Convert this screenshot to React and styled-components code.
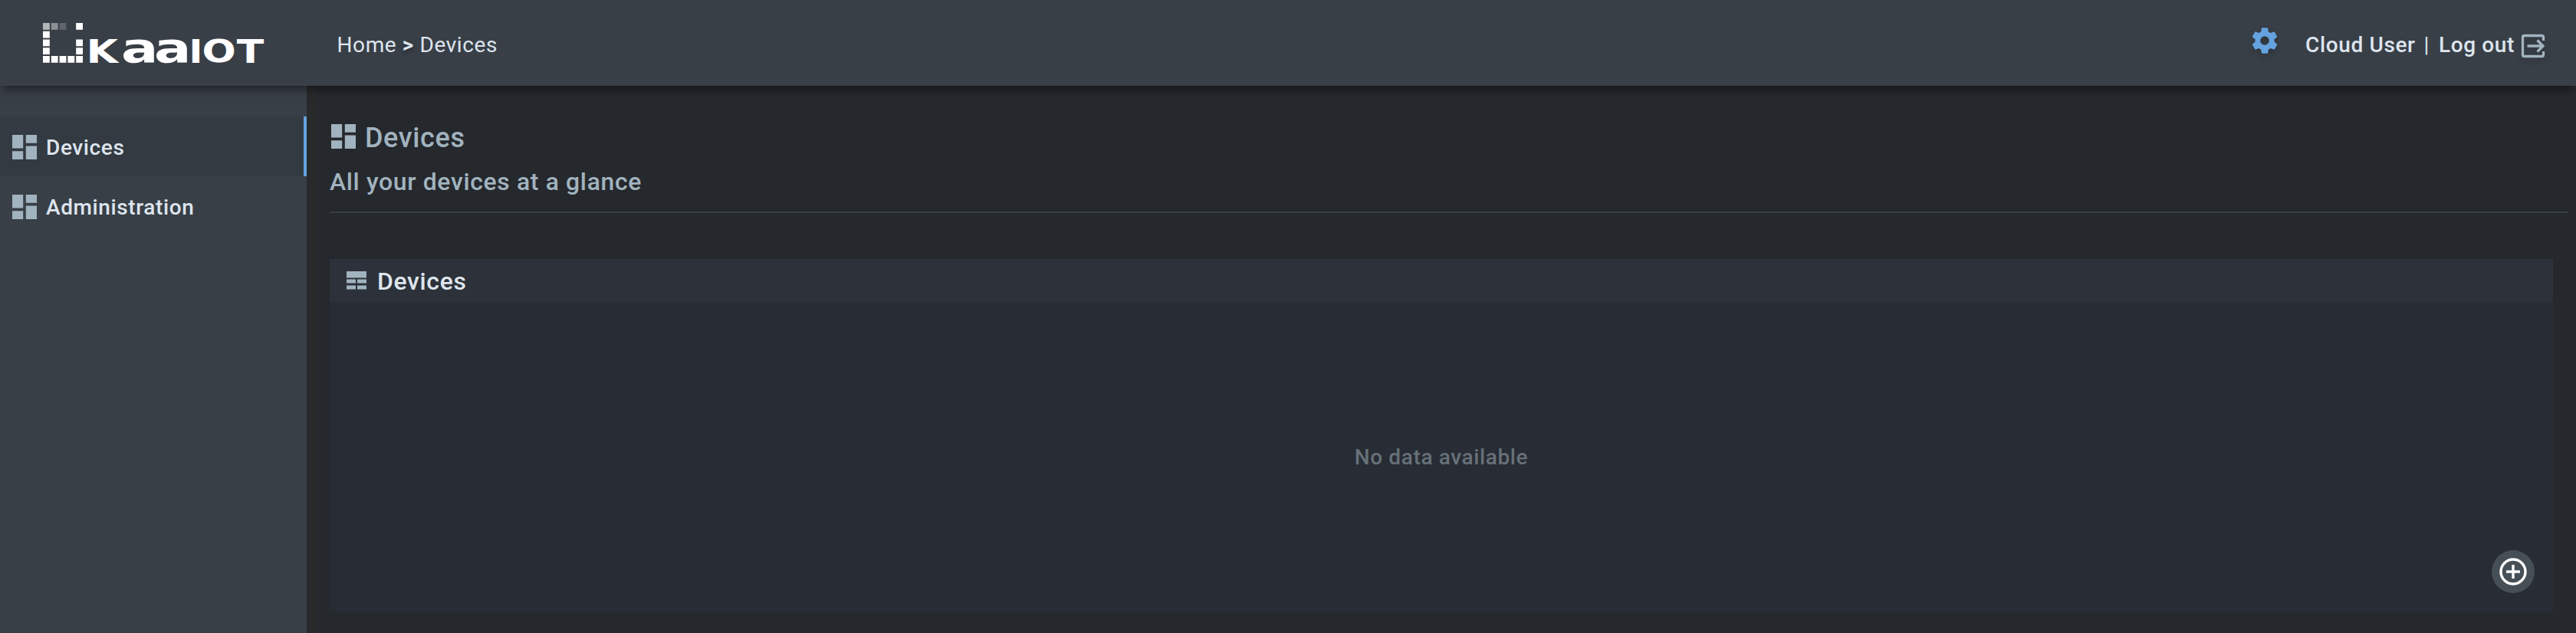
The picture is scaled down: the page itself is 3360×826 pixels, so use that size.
import React from "react";
import styled, { createGlobalStyle } from "styled-components";

const Global = createGlobalStyle`
  *, *::before, *::after { box-sizing: border-box; }
  body { margin: 0; background: #25282c; font-family: Roboto, "Liberation Sans", sans-serif; }
`;

const Page = styled.div`
  display: grid;
  grid-template-columns: 400px 1fr;
  grid-template-rows: 112px 1fr;
  height: 826px;
  overflow: hidden;
  letter-spacing: 0.62px;
  color: #dee5ee;
`;

const Header = styled.header`
  grid-column: 1 / -1;
  position: relative;
  z-index: 2;
  display: flex;
  align-items: center;
  background: #393f47;
  box-shadow: 0 8px 12px -4px rgba(0, 0, 0, 0.5);
`;

const Logo = styled.svg`
  display: block;
  width: 400px;
  height: 112px;
  fill: #fff;
  font-family: "DejaVu Sans", sans-serif;
  font-weight: 700;
  letter-spacing: 0;
`;

const Breadcrumbs = styled.nav`
  flex: 1;
  display: flex;
  gap: 7.5px;
  padding: 6px 0 0 39.5px;
  font-size: 28px;
  line-height: 36px;
`;

const Separator = styled.span`
  font-weight: 700;
  text-shadow: 0 4px 6px rgba(0, 0, 0, 0.35);
`;

const UserArea = styled.div`
  display: flex;
  align-items: center;
  padding: 6px 38px 0 0;
  font-size: 28px;
  font-weight: 500;
  line-height: 36px;
  white-space: pre;
`;

const Icon = styled.svg`
  display: block;
  flex: none;
  width: ${(p) => p.$w}px;
  height: ${(p) => p.$h ?? p.$w}px;
  fill: ${(p) => p.$color ?? "#a1b3bf"};
`;

const SettingsIcon = styled(Icon)`
  margin: 0 33px 12px 0;
  filter: drop-shadow(0 4px 4px rgba(0, 0, 0, 0.2));
`;

const LogoutIcon = styled(Icon)`
  margin: 2px 0 0 6px;
  filter: drop-shadow(0 4px 4px rgba(0, 0, 0, 0.2));
`;

const Bar = styled.span`
  margin: 0 12px 0 11px;
  font-weight: 400;
`;

const Sidebar = styled.aside`
  padding-top: 40px;
  background: #393f47;
`;

const NavItem = styled.a`
  display: flex;
  align-items: center;
  gap: 12px;
  height: 78px;
  padding: 2px 0 0 16px;
  border-right: 4px solid ${(p) => (p.$active ? "#64a3e0" : "transparent")};
  background: ${(p) => (p.$active ? "#343a42" : "transparent")};
  font-size: 28px;
  font-weight: 500;
`;

const NavLabel = styled.span`
  padding-top: 1px;
`;

const Main = styled.main`
  padding: 44px 10px 0 18px;
  border-left: 12px solid #28292b;
`;

const PageHeading = styled.div`
  height: 122px;
  border-bottom: 2px solid #393f47;
  color: #a1b3bf;
`;

const Title = styled.h1`
  display: flex;
  align-items: center;
  gap: 12px;
  margin: 0;
  padding-left: 2px;
  height: 44px;
  font-size: 36px;
  font-weight: 500;
`;

const TitleText = styled.span`
  padding-top: 4px;
`;

const Subtitle = styled.p`
  margin: 18px 0 0;
  font-size: 32px;
  font-weight: 500;
  line-height: 38px;
`;

const Panel = styled.section`
  display: flex;
  flex-direction: column;
  height: 460px;
  margin: 60px 20px 0 0;
  background: #282c34;
`;

const PanelHeader = styled.h2`
  display: flex;
  align-items: center;
  gap: 14px;
  height: 56px;
  margin: 0;
  padding: 2px 0 0 22px;
  background: #2d3139;
  font-size: 32px;
  font-weight: 500;
`;

const PanelIcon = styled(Icon)`
  margin-top: -2px;
`;

const PanelBody = styled.div`
  position: relative;
  flex: 1;
  display: flex;
  align-items: center;
  justify-content: center;
  color: #667179;
  font-size: 28px;
  font-weight: 500;
`;

const AddButton = styled.button`
  position: absolute;
  right: 24px;
  bottom: 24px;
  display: grid;
  place-items: center;
  width: 56px;
  height: 56px;
  padding: 0;
  border: 0;
  border-radius: 50%;
  background: #464f56;
`;

const BLOCKS = [
  [0, 0, 0.62], [1, 0, 0.42], [2, 0, 0.2], [4, 0, 1], [0, 1, 1], [0, 2, 1], [4, 2, 1],
  [0, 3, 1], [4, 3, 1], [0, 4, 1], [1, 4, 1], [2, 4, 1], [3, 4, 1], [4, 4, 1],
];

const WORDMARK = [
  { ch: "K", x: 112.6, y: 82, size: 42.5, stretch: 1.26 },
  { ch: "a", x: 157.9, y: 81.3, size: 54, stretch: 1.33 },
  { ch: "a", x: 200.9, y: 81.3, size: 54, stretch: 1.33 },
  { ch: "I", x: 246.6, y: 82, size: 42.5, stretch: 1.13 },
  { ch: "O", x: 263.4, y: 81.4, size: 41, stretch: 1.27 },
  { ch: "T", x: 308.8, y: 82, size: 42.5, stretch: 1.226 },
];

const DashboardIcon = () => (
  <Icon $w={32} viewBox="0 0 32 32">
    <path d="M0 0h14.2v17.6H0zM17.8 0H32v10.8H17.8zM0 21.2h14.2V32H0zM17.8 14.4H32V32H17.8z" />
  </Icon>
);

const TableIcon = () => (
  <PanelIcon $w={26} $h={24} viewBox="0 0 26 24">
    <path d="M0 0h26v8.400H0zM0 10.400h12v5.200H0zM14 10.400h12v5.200H14zM0 18.400h12V23.600H0zM14 18.400h12V23.600H14z" />
  </PanelIcon>
);

const GEAR =
  "M12,15.5A3.5,3.5 0 0,1 8.5,12A3.5,3.5 0 0,1 12,8.5A3.5,3.5 0 0,1 15.5,12A3.5,3.5 0 0,1 12,15.5M19.43,12.97C19.47,12.65 19.5,12.33 19.5,12C19.5,11.67 19.47,11.34 19.43,11L21.54,9.37C21.73,9.22 21.78,8.95 21.66,8.73L19.66,5.27C19.54,5.05 19.27,4.96 19.05,5.05L16.56,6.05C16.04,5.66 15.5,5.32 14.87,5.07L14.5,2.42C14.46,2.18 14.25,2 14,2H10C9.75,2 9.54,2.18 9.5,2.42L9.13,5.07C8.5,5.32 7.96,5.66 7.44,6.05L4.95,5.05C4.73,4.96 4.46,5.05 4.34,5.27L2.34,8.73C2.21,8.95 2.27,9.22 2.46,9.37L4.57,11C4.53,11.34 4.5,11.67 4.5,12C4.5,12.33 4.53,12.65 4.57,12.97L2.46,14.63C2.27,14.78 2.21,15.05 2.34,15.27L4.34,18.73C4.46,18.95 4.73,19.03 4.95,18.95L7.44,17.94C7.96,18.34 8.5,18.68 9.13,18.93L9.5,21.58C9.54,21.82 9.75,22 10,22H14C14.25,22 14.46,21.82 14.5,21.58L14.87,18.93C15.5,18.67 16.04,18.34 16.56,17.94L19.05,18.95C19.27,19.03 19.54,18.95 19.66,18.73L21.66,15.27C21.78,15.05 21.73,14.78 21.54,14.63L19.43,12.97Z";

const NAV = [
  { label: "Devices", active: true },
  { label: "Administration", active: false },
];

export default function App() {
  return (
    <Page>
      <Global />
      <Header>
        <Logo viewBox="0 0 400 112">
          {BLOCKS.map(([c, r, o]) => (
            <rect key={`${c}-${r}`} x={56 + c * 10.8} y={30 + r * 10.75} width="8.8" height="8.8" opacity={o} />
          ))}
          {WORDMARK.map((l, i) => (
            <text key={i} fontSize={l.size} transform={`translate(${l.x} ${l.y}) scale(${l.stretch} 1)`}>
              {l.ch}
            </text>
          ))}
        </Logo>
        <Breadcrumbs>
          <span>Home</span>
          <Separator>&gt;</Separator>
          <span>Devices</span>
        </Breadcrumbs>
        <UserArea>
          <SettingsIcon $w={40} $color="#64a3e0" viewBox="0 0 24 24">
            <path d={GEAR} />
          </SettingsIcon>
          <span>Cloud User</span>
          <Bar>|</Bar>
          <span>Log out</span>
          <LogoutIcon $w={36} viewBox="0 0 36 36">
            <path
              d="M31.500 11V6.500a2 2 0 0 0-2-2H6.500a2 2 0 0 0-2 2v23a2 2 0 0 0 2 2H29.500a2 2 0 0 0 2-2V25M10.500 18h20M23.500 10.500l7.500 7.500-7.500 7.500"
              fill="none"
              stroke="#a1b3bf"
              strokeWidth="3.300"
            />
          </LogoutIcon>
        </UserArea>
      </Header>
      <Sidebar>
        {NAV.map((n) => (
          <NavItem key={n.label} $active={n.active}>
            <DashboardIcon />
            <NavLabel>{n.label}</NavLabel>
          </NavItem>
        ))}
      </Sidebar>
      <Main>
        <PageHeading>
          <Title>
            <DashboardIcon />
            <TitleText>Devices</TitleText>
          </Title>
          <Subtitle>All your devices at a glance</Subtitle>
        </PageHeading>
        <Panel>
          <PanelHeader>
            <TableIcon />
            <span>Devices</span>
          </PanelHeader>
          <PanelBody>
            <span>No data available</span>
            <AddButton aria-label="Add device">
              <Icon $w={36} viewBox="0 0 36 36">
                <circle cx="18" cy="18" r="16" fill="none" stroke="#fff" strokeWidth="3.400" />
                <path d="M18 9v18M9 18h18" stroke="#fff" strokeWidth="3.400" />
              </Icon>
            </AddButton>
          </PanelBody>
        </Panel>
      </Main>
    </Page>
  );
}
